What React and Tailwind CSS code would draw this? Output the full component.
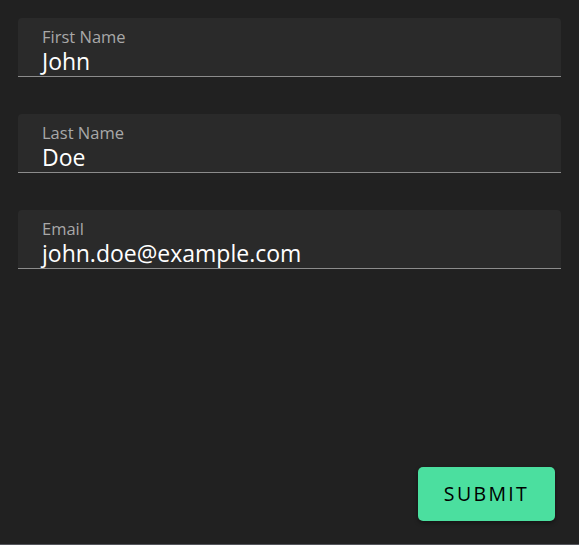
const fields = [
  { label: "First Name", value: "John" },
  { label: "Last Name", value: "Doe" },
  { label: "Email", value: "john.doe@example.com" },
];

export default function App() {
  return (
    <div
      className="h-[545px] w-full bg-[#212121] border-b border-[#53555b] flex flex-col px-[18px] pt-[18px] pb-[23px]"
      style={{ fontFamily: "'Open Sans', 'Noto Sans', sans-serif" }}
    >
      <div className="flex flex-col gap-[37px]">
        {fields.map((f) => (
          <div
            key={f.label}
            className="h-[59px] rounded-t-[4px] bg-[#2a2a2a] border-b border-[#8c8c8c] px-[24px] pt-[8px]"
          >
            <div className="text-[16.5px] leading-[21px] text-[#a8a8a8]">{f.label}</div>
            <div className="text-[23px] leading-[28px] text-white">{f.value}</div>
          </div>
        ))}
      </div>
      <div className="flex-1" />
      <div className="flex justify-end pr-[6px]">
        <button className="h-[54px] w-[137px] rounded-[5px] bg-[#4bdf9f] text-[19.5px] tracking-[0.12em] text-black shadow-[0_2px_4px_rgba(0,0,0,0.4)]">
          SUBMIT
        </button>
      </div>
    </div>
  );
}
